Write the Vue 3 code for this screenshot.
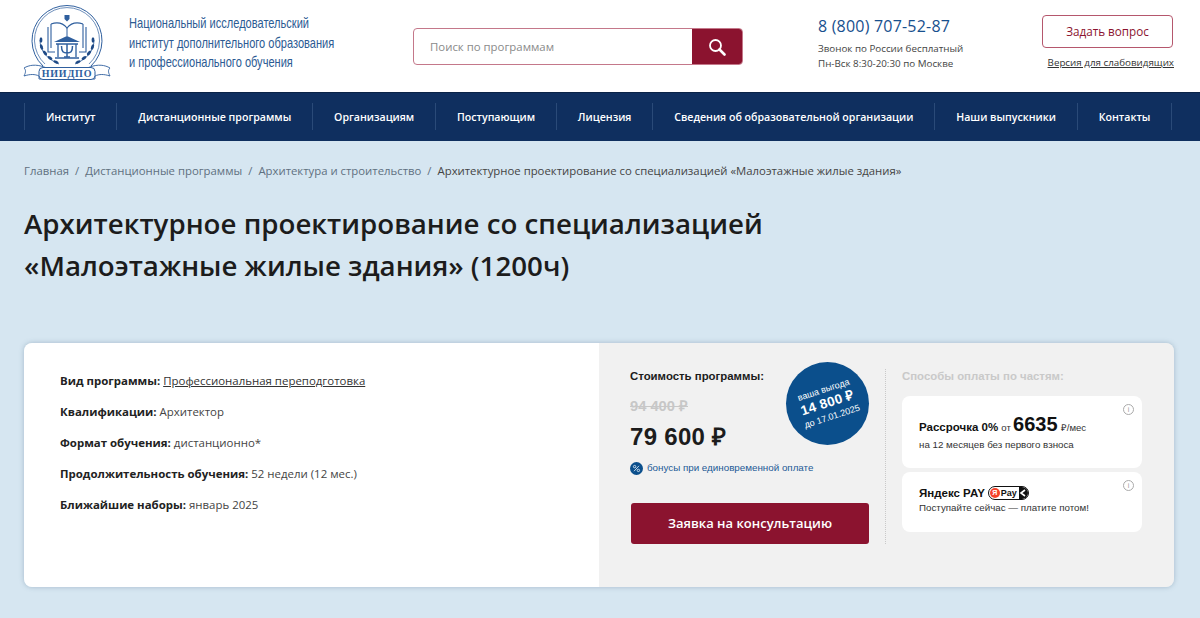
<template>
  <div class="page">
    <!-- шапка -->
    <header class="top">
      <div class="brand">
        <svg class="logo" width="88" height="75" viewBox="0 0 88 75" fill="none" stroke="#2f5f9e">
          <path d="M20 61 A35 35 0 1 1 68 61" stroke-width="1" />
          <path d="M22 59 A32.500 32.500 0 1 1 66 59" stroke-width="0.700" />
          <!-- герб -->
          <path d="M41.500 10h5v4l-2.500 2.500-2.500-2.500z" fill="#2f5f9e" stroke="none" />
          <!-- книга -->
          <path d="M28 19v24M25 22v25h7M60 19v24M63 22v25h-7" stroke-width="1.100" />
          <path d="M28 19c6-2 12-1 16 4 4-5 10-6 16-4" stroke-width="1.200" />
          <path d="M44 23v8" stroke-width="1" />
          <!-- крыша и пси -->
          <path d="M31 37l13-6 13 6z" fill="#2f5f9e" stroke="none" />
          <path d="M33 39h22M35 39v13M53 39v13M32 53h24" stroke-width="1.300" />
          <path d="M38.500 41c0 6 2 7 5.500 7s5.500-1 5.500-7M44 39v13M41 52h6" stroke-width="1.500" />
          <!-- ветви -->
          <path d="M17 35c0 11 7 19 19 24M71 35c0 11-7 19-19 24" stroke-width="0.800" />
          <g fill="#1f4a86" stroke="none">
            <ellipse cx="18" cy="35" rx="1.400" ry="2.800" />
            <ellipse cx="18.500" cy="42" rx="1.400" ry="2.800" transform="rotate(-20 18.500 42)" />
            <ellipse cx="22" cy="48" rx="1.400" ry="2.800" transform="rotate(-40 22 48)" />
            <ellipse cx="27" cy="53" rx="1.400" ry="2.800" transform="rotate(-55 27 53)" />
            <ellipse cx="33" cy="57" rx="1.400" ry="2.800" transform="rotate(-65 33 57)" />
            <ellipse cx="70" cy="35" rx="1.400" ry="2.800" />
            <ellipse cx="69.500" cy="42" rx="1.400" ry="2.800" transform="rotate(20 69.500 42)" />
            <ellipse cx="66" cy="48" rx="1.400" ry="2.800" transform="rotate(40 66 48)" />
            <ellipse cx="61" cy="53" rx="1.400" ry="2.800" transform="rotate(55 61 53)" />
            <ellipse cx="55" cy="57" rx="1.400" ry="2.800" transform="rotate(65 55 57)" />
          </g>
          <!-- лента -->
          <path d="M1 71c2-4 2-6 0-8 5-3 12-4 20-1 6 2 12 3 23 3s17-1 23-3c8-3 15-2 20 1-2 2-2 4 0 8-6-2-11-2-15 0v3H16v-3c-4-2-9-2-15 0z" fill="#fff" stroke-width="0.900" />
          <rect x="16" y="62.500" width="56" height="12" rx="4" fill="#fff" stroke-width="1" />
          <text x="44" y="72" text-anchor="middle" class="logo-text">НИИДПО</text>
        </svg>
        <div class="brand-name">
          Национальный исследовательский<br />
          институт дополнительного образования<br />
          и профессионального обучения
        </div>
      </div>

      <div class="search">
        <div class="search-field">Поиск по программам</div>
        <div class="search-btn">
          <svg width="18" height="18" viewBox="0 0 18 18" fill="none" stroke="#fff">
            <circle cx="7.500" cy="7.500" r="5.500" stroke-width="1.800" />
            <path d="M11.500 11.500l5 5" stroke-width="2.600" stroke-linecap="round" />
          </svg>
        </div>
      </div>

      <div class="contacts">
        <div class="phone">8 (800) 707-52-87</div>
        <div class="phone-note">Звонок по России бесплатный<br />Пн-Вск 8:30-20:30 по Москве</div>
      </div>

      <div class="actions">
        <div class="ask">Задать вопрос</div>
        <a class="low-vision">Версия для слабовидящих</a>
      </div>
    </header>

    <!-- меню -->
    <nav class="menu">
      <a v-for="item in menu" :key="item" class="menu-item">{{ item }}</a>
    </nav>

    <section class="content">
      <div class="crumbs">
        <template v-for="(c, i) in crumbs" :key="c">
          <span v-if="i" class="sep">/</span>
          <span :class="{ last: i === crumbs.length - 1 }">{{ c }}</span>
        </template>
      </div>

      <h1>Архитектурное проектирование со специализацией<br />«Малоэтажные жилые здания» (1200ч)</h1>

      <div class="card">
        <div class="info">
          <p><b>Вид программы:</b> <a>Профессиональная переподготовка</a></p>
          <p><b>Квалификации:</b> Архитектор</p>
          <p><b>Формат обучения:</b> дистанционно*</p>
          <p><b>Продолжительность обучения:</b> 52 недели (12 мес.)</p>
          <p><b>Ближайшие наборы:</b> январь 2025</p>
        </div>

        <div class="side">
          <div class="price">
            <div class="price-title">Стоимость программы:</div>
            <div class="price-old">94 400 ₽</div>
            <div class="price-new">79 600 ₽</div>
            <div class="bonus">
              <svg class="bonus-icon" width="13" height="13" viewBox="0 0 13 13" fill="none" stroke="#dbe8f4" stroke-width="0.900">
                <circle cx="6.500" cy="6.500" r="6.500" fill="#0b4f8c" stroke="none" />
                <circle cx="4.600" cy="4.600" r="1.200" />
                <circle cx="8.400" cy="8.400" r="1.200" />
                <path d="M9 3.800L4 9.200" />
              </svg>
              бонусы при единовременной оплате
            </div>
            <div class="order">Заявка на консультацию</div>
            <div class="badge">
              <div class="badge-inner">
                <span class="b1">ваша выгода</span>
                <span class="b2">14 800 ₽</span>
                <span class="b3">до 17.01.2025</span>
              </div>
            </div>
          </div>

          <div class="parts">
            <div class="parts-title">Способы оплаты по частям:</div>
            <div class="part part-a">
              <span class="info-i">i</span>
              <div class="part-main">
                <b>Рассрочка 0%</b> <span class="small">от</span> <b class="sum">6635</b> <span class="small">₽/мес</span>
              </div>
              <div class="part-sub">на 12 месяцев без первого взноса</div>
            </div>
            <div class="part part-b">
              <span class="info-i">i</span>
              <div class="part-main ya">
                <b>Яндекс PAY</b>
                <span class="ypay">
                  <span class="ya-dot">Я</span>
                  <span class="ya-word">Pay</span>
                  <span class="ya-end">
                    <svg width="9" height="8" viewBox="0 0 9 8" fill="none" stroke="#fff" stroke-width="1.600"><path d="M6 1L2 4l4 3" /></svg>
                  </span>
                </span>
              </div>
              <div class="part-sub">Поступайте сейчас — платите потом!</div>
            </div>
          </div>
        </div>
      </div>
    </section>
  </div>
</template>

<script setup>
const menu = [
  'Институт',
  'Дистанционные программы',
  'Организациям',
  'Поступающим',
  'Лицензия',
  'Сведения об образовательной организации',
  'Наши выпускники',
  'Контакты'
]

const crumbs = [
  'Главная',
  'Дистанционные программы',
  'Архитектура и строительство',
  'Архитектурное проектирование со специализацией «Малоэтажные жилые здания»'
]
</script>

<style>
html, body {
  margin: 0;
  background: #d6e6f1;
}
</style>

<style scoped>
* {
  box-sizing: border-box;
}

.page {
  width: 1200px;
  height: 618px;
  overflow: hidden;
  font-family: "Open Sans", "Noto Sans", sans-serif;
  color: #333;
  background: #d6e6f1;
}

/* шапка */
.top {
  height: 92px;
  background: #fff;
  display: flex;
  align-items: flex-start;
}
.brand {
  width: 413px;
  padding: 5px 0 0 23px;
  display: flex;
}
.logo {
  flex: none;
}
.logo-text {
  font: bold 10px "Liberation Serif", serif;
  letter-spacing: 0.8px;
  fill: #2f5f9e;
  stroke: none;
}
.brand-name {
  margin: 8px 0 0 18px;
  font-family: "Liberation Sans", sans-serif;
  font-size: 15px;
  line-height: 19.500px;
  color: #2c5b93;
  white-space: nowrap;
  transform: scaleX(0.737);
  transform-origin: left top;
}

.search {
  margin-top: 28px;
  width: 330px;
  height: 37px;
  display: flex;
  border: 1px solid #c4788a;
  border-radius: 4px;
  overflow: hidden;
}
.search-field {
  flex: 1;
  padding-left: 16px;
  font-size: 11.400px;
  line-height: 36px;
  color: #8a8a8a;
}
.search-btn {
  width: 50px;
  background: #8b132f;
  display: flex;
  align-items: center;
  justify-content: center;
}

.contacts {
  width: 224px;
  margin: 16px 0 0 75px;
}
.phone {
  font-size: 16px;
  line-height: 20px;
  color: #17508e;
  letter-spacing: 0.200px;
}
.phone-note {
  margin-top: 5px;
  font-size: 9.800px;
  line-height: 15px;
  color: #444;
}

.actions {
  width: 132px;
  margin-top: 15px;
  display: flex;
  flex-direction: column;
  align-items: flex-end;
}
.ask {
  align-self: flex-start;
  width: 131px;
  height: 33px;
  border: 1px solid #b5576d;
  border-radius: 4px;
  text-align: center;
  font-size: 11.700px;
  line-height: 31px;
  color: #8b132f;
}
.low-vision {
  margin-top: 7px;
  font-size: 9.800px;
  line-height: 15px;
  color: #333;
  text-decoration: underline;
  white-space: nowrap;
}

/* меню */
.menu {
  height: 49px;
  background: #0f2f5f;
  border-top: 1px solid #0a2347;
  padding: 10px 0 0 24px;
  display: flex;
  align-items: flex-start;
}
.menu-item {
  height: 27px;
  padding: 0 20.900px;
  border-left: 1px solid #2a4a78;
  font-size: 10.600px;
  font-weight: 600;
  line-height: 28px;
  color: #fff;
  white-space: nowrap;
}
.menu-item:last-child {
  border-right: 1px solid #2a4a78;
}

/* контент */
.content {
  padding: 22px 26px 0 24px;
}
.crumbs {
  font-size: 11.350px;
  line-height: 16px;
  color: #607080;
}
.crumbs .sep {
  margin: 0 6px;
}
.crumbs .last {
  color: #444;
}
h1 {
  margin: 23px 0 0;
  font-size: 27.700px;
  font-weight: 600;
  line-height: 42px;
  color: #1c1c1c;
}

.card {
  margin-top: 57px;
  height: 244px;
  display: flex;
  border-radius: 8px;
  overflow: hidden;
  box-shadow: 0 0 5px rgba(70, 100, 130, 0.35);
}
.info {
  width: 575px;
  background: #fff;
  padding: 29px 0 0 36px;
  font-size: 11.450px;
  color: #444;
}
.info p {
  margin: 0 0 13px;
  line-height: 18px;
}
.info b {
  font-weight: 700;
  color: #222;
}
.info a {
  text-decoration: underline;
  color: #333;
}

.side {
  flex: 1;
  background: #f1f1f1;
  display: flex;
  padding: 26px 32px 0 31px;
  font-family: "Liberation Sans", Arial, sans-serif;
}
.price {
  width: 256px;
  height: 175px;
  padding-right: 17px;
  border-right: 1px dotted #c9c9c9;
  position: relative;
  flex: none;
}
.price-title {
  font-size: 11.400px;
  font-weight: 700;
  line-height: 14px;
  color: #1c1c1c;
}
.price-old {
  margin-top: 16px;
  font-size: 14.700px;
  font-weight: 700;
  line-height: 14px;
  color: #c7c7c7;
  text-decoration: line-through;
}
.price-new {
  margin-top: 9px;
  font-size: 24px;
  font-weight: 700;
  line-height: 30px;
  color: #1c1c1c;
  letter-spacing: 0.300px;
}
.bonus {
  margin-top: 9px;
  display: flex;
  align-items: center;
  gap: 4px;
  font-size: 9.800px;
  line-height: 14px;
  color: #1d5a96;
}
.bonus-icon {
  flex: none;
}
.order {
  margin: 28px 0 0 1px;
  width: 238px;
  height: 41px;
  border-radius: 3px;
  background: #8b132f;
  color: #fff;
  text-align: center;
  font-family: "Open Sans", sans-serif;
  font-size: 13px;
  font-weight: 600;
  line-height: 41px;
}
.badge {
  position: absolute;
  top: -7px;
  left: 156px;
  width: 83px;
  height: 83px;
  border-radius: 50%;
  background: #0b4f8c;
  color: #fff;
  display: flex;
  align-items: center;
  justify-content: center;
}
.badge-inner {
  transform: rotate(-18deg);
  display: flex;
  flex-direction: column;
  align-items: center;
  white-space: nowrap;
}
.b1 {
  font-size: 9px;
  line-height: 11px;
}
.b2 {
  font-size: 13.500px;
  font-weight: 700;
  line-height: 16px;
  letter-spacing: 0.300px;
}
.b3 {
  font-size: 9px;
  line-height: 12px;
}

.parts {
  margin-left: 16px;
  width: 240px;
}
.parts-title {
  font-size: 11.400px;
  font-weight: 700;
  line-height: 14px;
  color: #c9c9c9;
}
.part {
  position: relative;
  background: #fff;
  border-radius: 8px;
  padding: 0 17px;
  color: #222;
}
.part-a {
  margin-top: 13px;
  height: 72px;
  padding-top: 18px;
}
.part-b {
  margin-top: 4px;
  height: 60px;
  padding-top: 13px;
}
.info-i {
  position: absolute;
  top: 8px;
  right: 8px;
  width: 11px;
  height: 11px;
  border: 1px solid #aaa;
  border-radius: 50%;
  font-size: 7px;
  line-height: 9px;
  text-align: center;
  color: #999;
}
.part-main {
  font-size: 11.500px;
  line-height: 20px;
  white-space: nowrap;
  color: #111;
}
.sum {
  margin-left: -1px;
  font-size: 20px;
}
.small {
  font-size: 9.600px;
  color: #333;
}
.part-sub {
  font-size: 9.750px;
  line-height: 14px;
  color: #333;
  white-space: nowrap;
}
.ya {
  display: flex;
  align-items: center;
  gap: 3px;
  line-height: 16px;
}
.ypay {
  display: flex;
  align-items: center;
  width: 41px;
  height: 14px;
  border: 1px solid #111;
  border-radius: 7px;
  overflow: hidden;
  background: #fff;
}
.ya-dot {
  width: 10px;
  height: 10px;
  margin-left: 1px;
  border-radius: 50%;
  background: #f5432a;
  color: #fff;
  font-size: 7px;
  font-weight: 700;
  line-height: 10px;
  text-align: center;
  flex: none;
}
.ya-word {
  margin-left: 1px;
  font-size: 9px;
  font-weight: 700;
  line-height: 12px;
}
.ya-end {
  flex: 1;
  align-self: stretch;
  margin-left: 2px;
  background: #111;
  display: flex;
  align-items: center;
  justify-content: center;
}
</style>
